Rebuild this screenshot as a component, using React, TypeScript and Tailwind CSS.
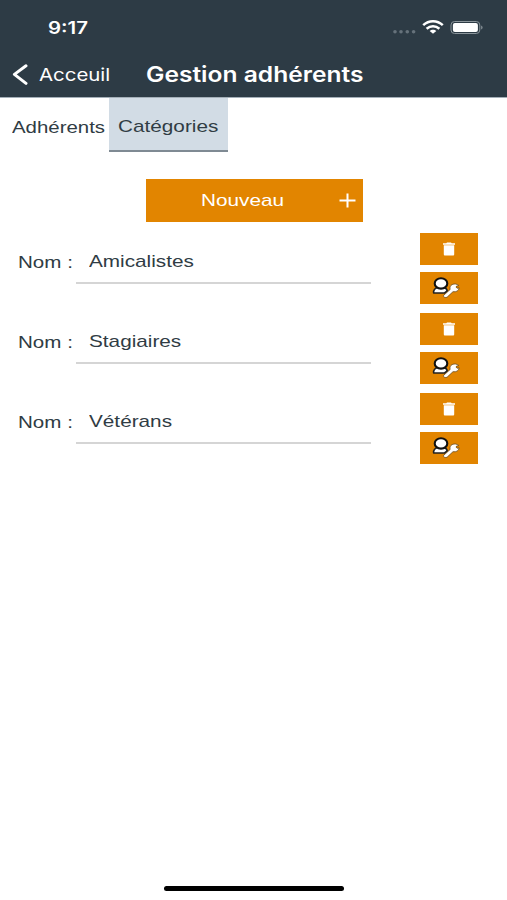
import React, { useState } from "react";

const CATEGORIES = ["Amicalistes", "Stagiaires", "Vétérans"];

const StatusBar = () => (
  <div className="flex h-[55px] items-center justify-between pl-12 pr-[23px]">
    <span className="origin-left scale-x-[1.2] font-['Inter',sans-serif] text-[17px] font-semibold leading-5">9:17</span>
    <svg width="92" height="20" viewBox="0 0 92 20" fill="none">
      <g fill="#66727b">
        <circle cx="3" cy="13.8" r="1.8" />
        <circle cx="9" cy="13.8" r="1.8" />
        <circle cx="15.3" cy="13.8" r="1.8" />
        <circle cx="21.6" cy="13.8" r="1.8" />
      </g>
      <g stroke="#fff" strokeWidth="2.5">
        <path d="M31.2 7.2C36.8 2 45.2 2 50.8 7.2" />
        <path d="M34.6 10.7C38.4 7.3 43.6 7.3 47.4 10.7" />
      </g>
      <path d="M41 15.8L37.7 12.9C39.4 11.2 42.6 11.2 44.3 12.9Z" fill="#fff" />
      <rect x="59" y="3.5" width="28.8" height="12" rx="3.5" stroke="#8b959b" />
      <rect x="60.9" y="5.1" width="25" height="8.8" rx="2" fill="#fff" />
      <path d="M89.2 7.4V11.5C91 10.8 91 8.1 89.2 7.4Z" fill="#8b959b" />
    </svg>
  </div>
);

const TrashIcon = () => (
  <svg width="14" height="16" viewBox="0 0 14 16" fill="#fff">
    <path d="M1 2.2H4.3L5 1.4H9L9.7 2.2H13V3.8H1Z" />
    <path d="M1.8 4.2H12.2V13.2C12.2 14 11.7 14.5 11 14.5H3C2.3 14.5 1.8 14 1.8 13.2Z" />
  </svg>
);

// Member bust with a wrench in front
const ManageIcon = () => (
  <svg width="28" height="22" viewBox="0 0 28 22" strokeLinejoin="round">
    <path d="M1.6 16C1.2 13 3.2 10.8 6 10.5H11.5C13.5 10.8 15 12.3 15.3 14L12.5 16Z" fill="#fff" stroke="#222" strokeWidth="1.6" />
    <ellipse cx="9" cy="6.4" rx="6.3" ry="5.2" fill="#fff" stroke="#111" strokeWidth="2.1" />
    <path
      d="M11.8 18.2L18.2 12.4C17.2 9.2 19.6 6.8 23.4 7C25 7.1 26.2 7.7 26.9 8.6L24.6 9L24.1 10.2L25.2 11.2L27.2 10.9C26.7 13.7 24.2 15.3 21 14.7L15.2 20.1C13.5 21.2 10.4 19.9 11.8 18.2Z"
      fill="#fff"
      stroke="#6b4a1a"
      strokeWidth="0.8"
    />
  </svg>
);

export default function App() {
  const [activeTab, setActiveTab] = useState("categories");

  return (
    <div className="flex h-[900px] w-full flex-col overflow-hidden bg-white font-['Liberation_Sans',Arial,sans-serif] text-[17px] text-[#303c44]">
      <header className="h-[98px] shrink-0 border-b border-[#a4afb8] bg-[#2d3b45] font-['Inter',sans-serif] text-white">
        <StatusBar />
        <div className="flex h-10 items-center pl-3">
          <button className="flex w-[134px] items-center">
            <svg width="17" height="22" viewBox="0 0 17 22" fill="none" stroke="#fff" strokeWidth="3" strokeLinecap="round" strokeLinejoin="round">
              <path d="M14 1.8L2.4 10.4L14 19.4" />
            </svg>
            <span className="ml-2.5 mt-0.5 inline-block origin-left scale-x-[1.2] text-[17px]">Acceuil</span>
          </button>
          <h1 className="origin-left scale-x-[1.17] whitespace-nowrap text-[21px] font-semibold leading-6">Gestion adhérents</h1>
        </div>
      </header>

      <nav className="flex h-[54px] shrink-0 pl-3">
        <button onClick={() => setActiveTab("adherents")} className="flex w-[97px] items-center pt-1.5">
          <span className="inline-block origin-left scale-x-[1.2]">Adhérents</span>
        </button>
        <button
          onClick={() => setActiveTab("categories")}
          className={`flex w-[119px] items-center pl-[9px] pt-1.5 ${
            activeTab === "categories" ? "border-b-2 border-[#7f8a93] bg-[#d2dce5]" : ""
          }`}
        >
          <span className="inline-block origin-left scale-x-[1.22]">Catégories</span>
        </button>
      </nav>

      <button className="ml-[146px] mt-[27px] flex h-[43px] w-[217px] shrink-0 items-center justify-between bg-[#e28500] pl-[55px] pr-[7px] text-white">
        <span className="inline-block origin-left scale-x-[1.22]">Nouveau</span>
        <svg width="17" height="16" viewBox="0 0 17 16" stroke="#fff" strokeWidth="2">
          <path d="M0.5 7.5H16.5M8.5 0.5V14.5" />
        </svg>
      </button>

      <main className="mt-[11px] flex flex-col gap-2">
        {CATEGORIES.map(name => (
          <div key={name} className="flex h-[72px] pl-[18px] pr-[29px]">
            <span className="mt-[17px] h-6 w-[58px] shrink-0">
              <span className="inline-block origin-left scale-x-[1.21] whitespace-nowrap">Nom :</span>
            </span>
            <div className="h-[51px] w-[295px] border-b-2 border-[#d5d5d5] pl-[13px] pt-4">
              <span className="inline-block origin-left scale-x-[1.22]">{name}</span>
            </div>
            <div className="ml-auto flex w-[58px] flex-col gap-[7px]">
              <button className="flex h-8 items-center justify-center bg-[#e28500]">
                <TrashIcon />
              </button>
              <button className="flex h-8 items-center bg-[#e28500] pl-3">
                <ManageIcon />
              </button>
            </div>
          </div>
        ))}
      </main>

      <div className="mb-[9px] mt-auto h-[5px] w-[180px] self-center rounded-full bg-black" />
    </div>
  );
}
